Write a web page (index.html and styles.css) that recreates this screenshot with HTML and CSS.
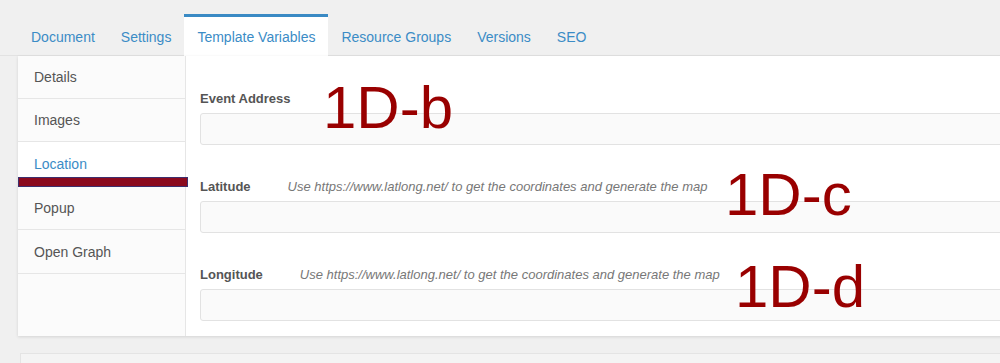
FILE: index.html
```html
<!DOCTYPE html>
<html lang="en">
<head>
  <meta charset="UTF-8" />
  <title>Template Variables</title>
  <link rel="stylesheet" href="styles.css">
</head>
<body>
  <ul class="tabs">
    <li class="tab">Document</li>
    <li class="tab">Settings</li>
    <li class="tab active">Template Variables</li>
    <li class="tab">Resource Groups</li>
    <li class="tab">Versions</li>
    <li class="tab">SEO</li>
  </ul>

  <div class="panel">
    <!-- categories on the left -->
    <ul class="side">
      <li class="side-item">Details</li>
      <li class="side-item">Images</li>
      <li class="side-item current">Location</li>
      <li class="side-item">Popup</li>
      <li class="side-item">Open Graph</li>
      <li class="mark"></li>
    </ul>

    <div class="fields">
      <div class="field">
        <div class="field-head">
          <span class="label">Event Address</span>
        </div>
        <div class="input"></div>
      </div>
      <div class="field">
        <div class="field-head">
          <span class="label">Latitude</span>
          <span class="help">Use https://www.latlong.net/ to get the coordinates and generate the map</span>
        </div>
        <div class="input"></div>
      </div>
      <div class="field">
        <div class="field-head">
          <span class="label">Longitude</span>
          <span class="help">Use https://www.latlong.net/ to get the coordinates and generate the map</span>
        </div>
        <div class="input"></div>
      </div>
    </div>

    <!-- annotation labels drawn on the screenshot -->
    <span class="note note-b">1D-b</span>
    <span class="note note-c">1D-c</span>
    <span class="note note-d">1D-d</span>
  </div>

  <div class="panel-next"></div>
</body>
</html>
```

FILE: styles.css
```css
:root {
  --link: #3b8cc6;
  --text: #555;
  --line: #e6e6e6;
  --note: #990000;
}

* {
  box-sizing: border-box;
  margin: 0;
  padding: 0;
}

body {
  background: #f0f0f0;
  font-family: 'Liberation Sans', Arial, sans-serif;
  color: var(--text);
  overflow: hidden;
}

/* top tabs */
.tabs {
  list-style: none;
  display: flex;
  padding: 14px 0 0 18px;
  border-bottom: 1px solid #e2e2e2;
}

.tab {
  font-size: 14px;
  line-height: 16px;
  color: var(--link);
  padding: 12px 13px 10px;
  border-top: 3px solid transparent;
}

.tab.active {
  background: #fff;
  border-top-color: #3a8ac4;
  margin-bottom: -1px;
  padding-bottom: 11px;
}

/* main panel */
.panel {
  position: relative;
  display: flex;
  background: #fff;
  margin: 0 -20px 0 18px;
  box-shadow: 0 1px 3px rgba(0, 0, 0, 0.12);
}

.side {
  position: relative;
  list-style: none;
  width: 168px;
  flex-shrink: 0;
  background: #fbfbfb;
  border-right: 1px solid var(--line);
}

.side-item {
  font-size: 14px;
  line-height: 16px;
  padding: 13px 16px;
  border-bottom: 1px solid var(--line);
}

.side-item:nth-child(n+3) {
  padding-top: 14px;
}

.side-item.current {
  background: #fff;
  color: var(--link);
}

.mark {
  position: absolute;
  left: 0;
  top: 121px;
  width: 170px;
  height: 10px;
  background: #8b0a1e;
  border: 1px solid #3d2f6e;
}

.fields {
  flex: 1;
  padding: 35px 0 15px 14px;
}

.field {
  margin-bottom: 34px;
}

.field:last-child {
  margin-bottom: 0;
}

.field-head {
  display: flex;
  align-items: baseline;
  line-height: 16px;
  margin-bottom: 6px;
}

.label {
  font-size: 13px;
  font-weight: bold;
}

.help {
  font-size: 13px;
  font-style: italic;
  color: #777;
  margin-left: 37px;
}

.input {
  height: 32px;
  background: #fafafa;
  border: 1px solid #e2e2e2;
  border-radius: 3px;
}

.note {
  position: absolute;
  font-size: 60px;
  line-height: 60px;
  color: var(--note);
}

.note-b { left: 305px; top: 22px; }
.note-c { left: 707px; top: 109px; }
.note-d { left: 717px; top: 201px; }

.panel-next {
  height: 30px;
  margin: 17px -20px 0 20px;
  background: #f4f4f4;
  border: 1px solid #e4e4e4;
}
```
